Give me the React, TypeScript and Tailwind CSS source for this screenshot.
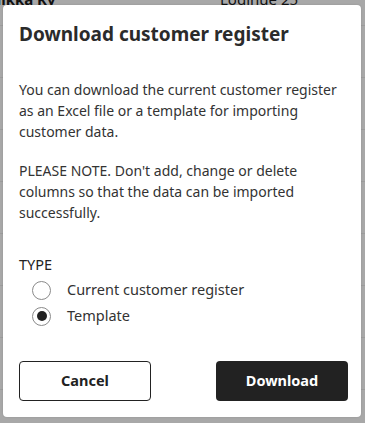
import { useState } from "react";

const rows = [
  { name: "Tiikka Ky", address: "Loginue 25" },
  { name: "", address: "" },
  { name: "", address: "" },
  { name: "", address: "" },
  { name: "", address: "" },
  { name: "", address: "" },
  { name: "", address: "" },
  { name: "", address: "" },
  { name: "", address: "" },
];

export default function App() {
  const [type, setType] = useState("template");

  const options = [
    { id: "current", label: "Current customer register" },
    { id: "template", label: "Template" },
  ];

  return (
    <div
      className="relative w-[365px] h-[423px] overflow-hidden bg-[#a8a8a8]"
      style={{ fontFamily: '"Noto Sans", "Open Sans", sans-serif' }}
    >
      {/* page behind the overlay */}
      <div className="-mt-[26px] flex flex-col">
        {rows.map((row, i) => (
          <div
            key={i}
            className="flex h-[52px] shrink-0 items-center border-b border-[#9c9c9c] text-[15px] font-bold text-[#111]"
          >
            <span className="-ml-[12px] w-[232px]">{row.name}</span>
            <span className="font-normal">{row.address}</span>
          </div>
        ))}
      </div>

      <div className="absolute left-[3px] top-[5px] flex h-[412px] w-[358px] flex-col rounded-[4px] bg-white pl-[16px] pr-[13px] pt-[16px] pb-[16px] text-[#2b2b2b] shadow-[0_0_2px_rgba(0,0,0,0.15)]">
        <h2 className="text-[19px] font-bold leading-[26px] text-[#2b2b2b]">
          Download customer register
        </h2>

        <div className="mt-[32px] w-[318px] text-[14px] leading-[21px] text-[#333]">
          <p>
            You can download the current customer register as an Excel file or
            a template for importing customer data.
          </p>
          <p className="mt-[18px]">
            PLEASE NOTE. Don't add, change or delete columns so that the data
            can be imported successfully.
          </p>
        </div>

        <div className="mt-[31px] text-[14.5px] leading-[20px] text-[#222]">TYPE</div>
        <div className="mt-[6px] flex flex-col gap-[6px] pl-[13px]">
          {options.map((o) => (
            <label
              key={o.id}
              className="flex h-[20px] cursor-pointer items-center gap-[16px] text-[14.5px] text-[#333]"
              onClick={() => setType(o.id)}
            >
              <span className="flex h-[19px] w-[19px] items-center justify-center rounded-full border border-[#8a8a8a] bg-white">
                {type === o.id && (
                  <span className="h-[10px] w-[10px] rounded-full bg-[#222]" />
                )}
              </span>
              {o.label}
            </label>
          ))}
        </div>

        <div className="mt-auto flex items-center justify-between">
          <button className="h-[40px] w-[132px] rounded-[4px] border border-[#222] bg-white text-[14.5px] font-bold text-[#222]">
            Cancel
          </button>
          <button className="h-[40px] w-[132px] rounded-[4px] bg-[#222] text-[14.5px] font-bold text-white">
            Download
          </button>
        </div>
      </div>
    </div>
  );
}
